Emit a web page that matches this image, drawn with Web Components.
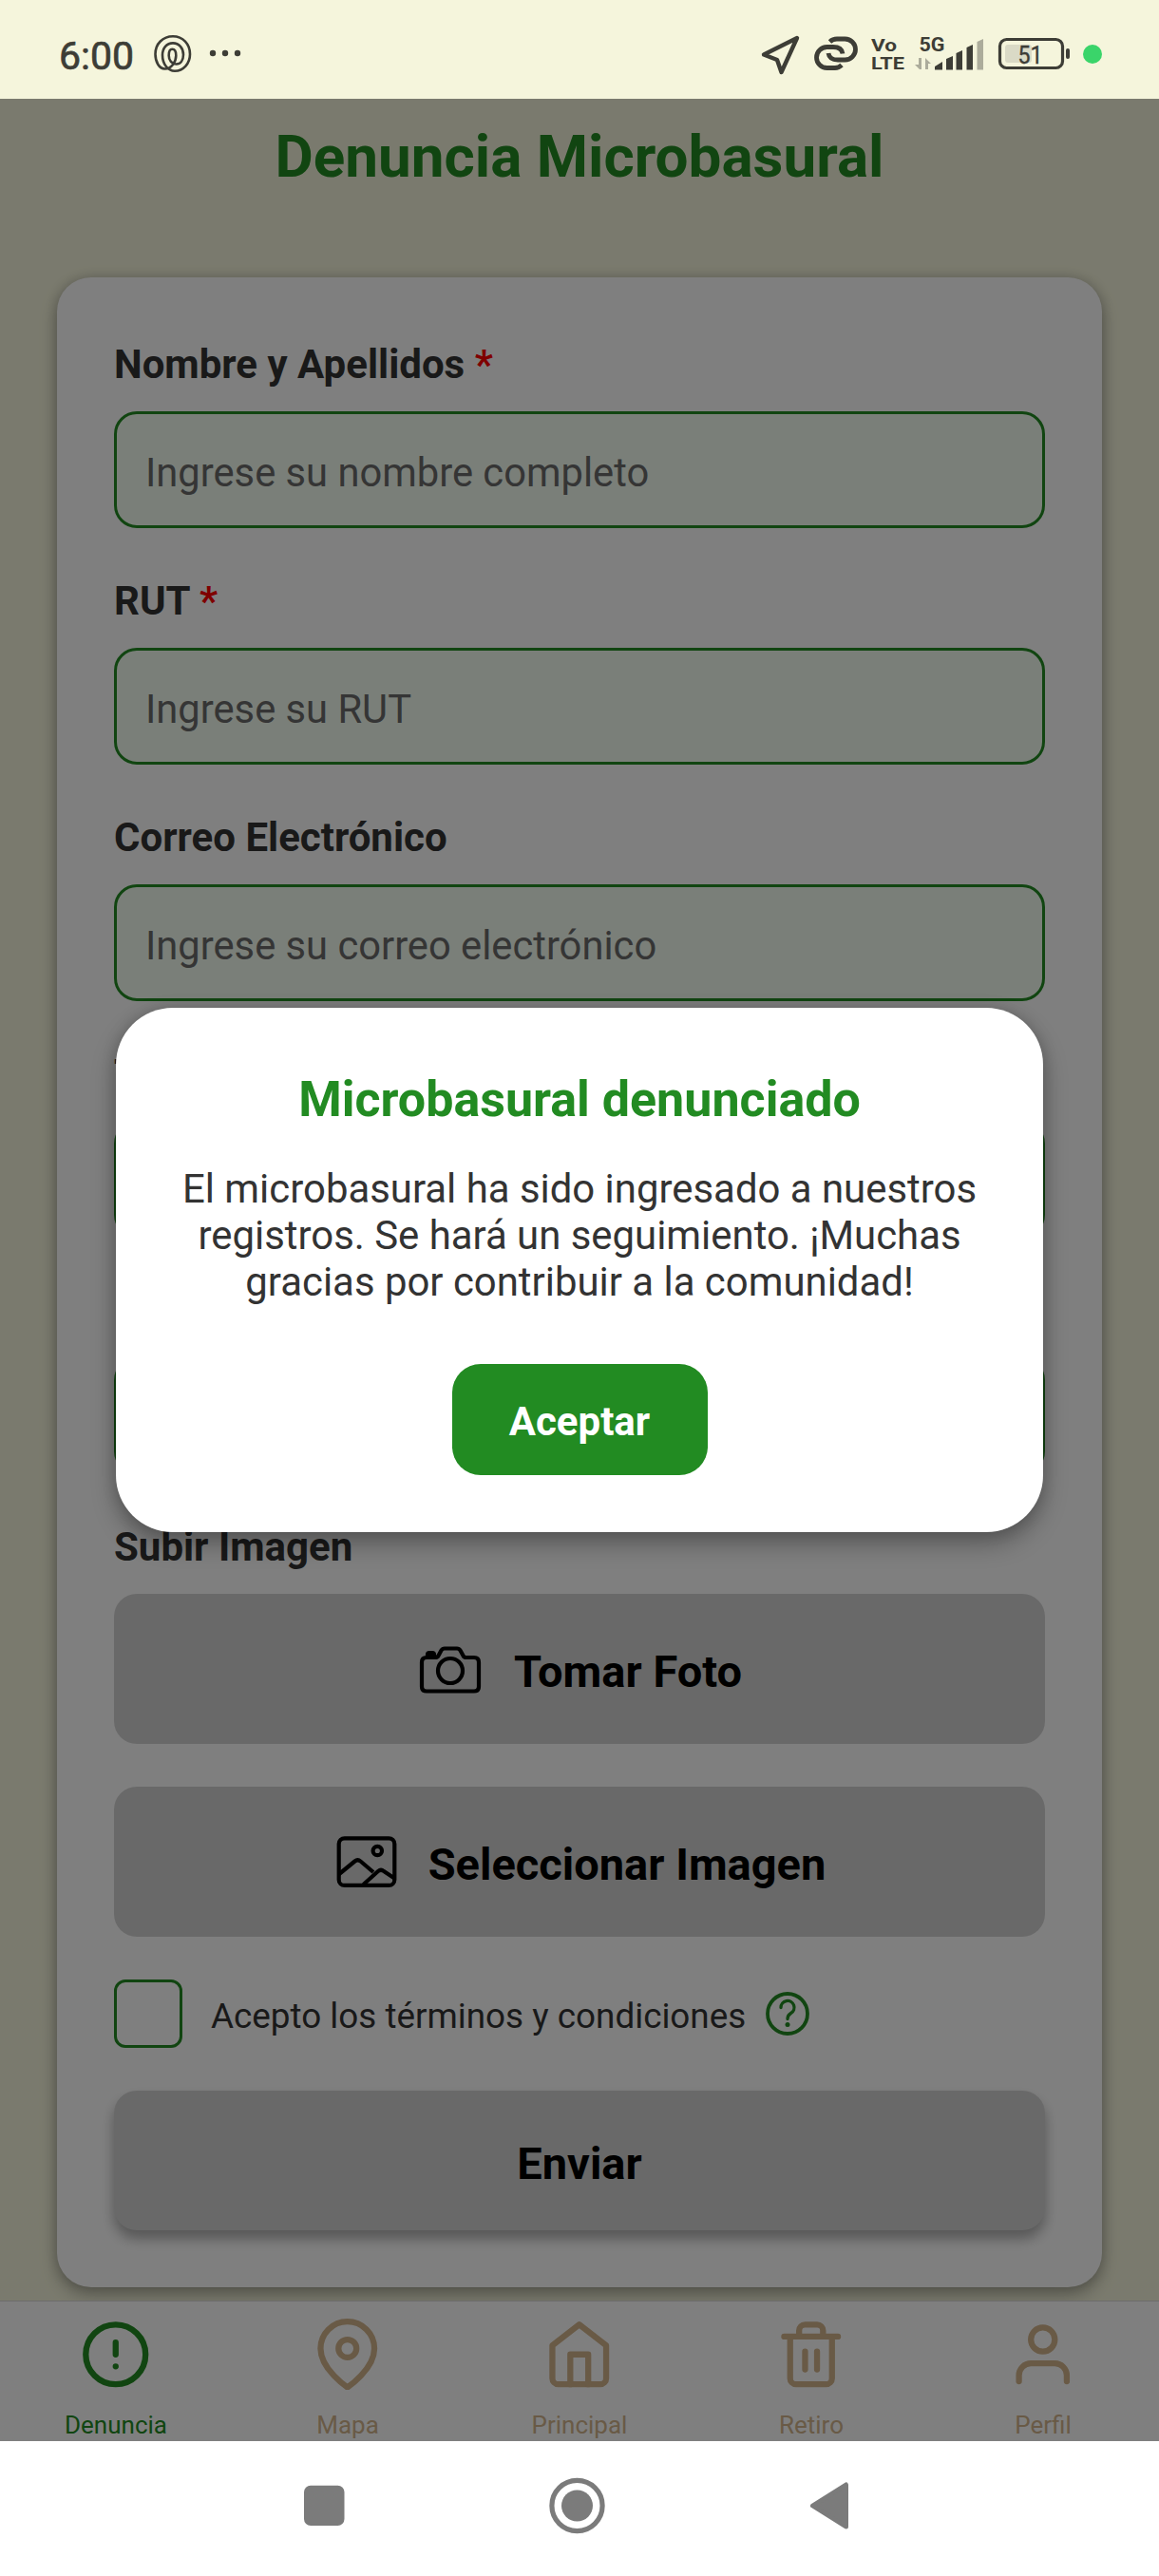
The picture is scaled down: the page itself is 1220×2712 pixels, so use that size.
<!DOCTYPE html>
<html lang="es"><head><meta charset="utf-8"><title>Denuncia Microbasural</title>
<style>
html,body{margin:0;padding:0}
body{font-family:Roboto,"Noto Sans",sans-serif;width:1220px;height:2712px;overflow:hidden;background:#f5f5dc;color:#333}
</style></head><body>
<denuncia-app></denuncia-app>
<script>
const define=(name,css,html)=>customElements.define(name,class extends HTMLElement{
  constructor(){super();const r=this.attachShadow({mode:'open'});
    r.innerHTML='<style>*{box-sizing:border-box}'+css+'</style>'+(typeof html==='function'?html(this):html);}
});

define('status-bar',`
:host{display:flex;height:104px;background:#f5f5dc;justify-content:space-between;align-items:flex-start;color:#3d3d36}
.l,.r{display:flex;align-items:flex-start}
.time{margin:35px 0 0 62px;width:100px;font-size:41px;line-height:48px;font-weight:400;white-space:nowrap;-webkit-text-stroke:.7px #3d3d36}
svg{display:block}
`,`<div class="l"><div class="time">6:00</div>
<svg width="100" height="104" viewBox="162 0 100 104" fill="none" stroke="#3d3d36" stroke-width="2.6">
<path d="M181.300 51.800C184 51.800 185.300 55 185.300 58.500C185.300 65 180.500 72.500 173.500 72.500C167.500 72.500 163.500 65 163.500 57C163.500 46 171.500 38.300 182 38.300C192.500 38.300 200 46.500 200 57C200 67 193 74.700 184 74.700C176.500 74.700 171 67 171 58C171 50.500 175.500 45.400 182 45.400C188.500 45.400 193 50.500 193 57.500C193 63.500 190 67.500 185.500 67.500C181 67.500 177.700 63.500 177.700 58.500C177.700 55 178.800 51.800 181.300 51.800z"/>
<g fill="#3d3d36" stroke="none"><circle cx="224" cy="56" r="3.200"/><circle cx="237" cy="56" r="3.200"/><circle cx="250" cy="56" r="3.200"/></g></svg></div>
<svg width="430" height="104" viewBox="790 0 430 104" fill="none" stroke="#3d3d36" font-family="Roboto">
<path d="M839 40 804 57.500l14 5.500 4.500 13z" stroke-width="4.400" stroke-linejoin="round"/>
<g stroke-width="4.800"><path d="M873.500 44q3-3 7.500-3h8.500a11 11 0 0 1 0 22H882q-9 0-10-7"/><path d="M886 68.500q-3 3-7 3h-8.500a11 11 0 0 1 0-22H877q9 0 10 7"/></g>
<g fill="#3d3d36" stroke="none">
<text x="917" y="54" font-size="18.500" font-weight="700" textLength="27" lengthAdjust="spacingAndGlyphs">Vo</text><text x="917" y="72.500" font-size="18.500" font-weight="700" textLength="35" lengthAdjust="spacingAndGlyphs">LTE</text>
<text x="967.500" y="53.500" font-size="20" font-weight="700" textLength="27" lengthAdjust="spacingAndGlyphs">5G</text>
<path d="M984 70l8-5v8.500h-8zM996 62l7-3v14.500h-7zM1006.500 56l6.500-3v20.500h-6.500zM1017.500 50l6.500-3v26.500h-6.500z"/>
<path d="M1028.500 44l6.500-3v32.500h-6.500z" fill="#acac9b"/>
<path d="M967 61h3v12h-2l-5-5h4zM974 61l6 6h-3v6h-3z" fill="#acac9b"/>
<rect x="1058" y="47" width="28" height="19" rx="3" fill="#dadac6"/>
<rect x="1122" y="51" width="4" height="11" rx="2"/>
<text x="1071.500" y="67" font-size="25" font-weight="400" textLength="26" lengthAdjust="spacingAndGlyphs" stroke="#3d3d36" stroke-width=".4">51</text></g>
<rect x="1052.500" y="41.500" width="66" height="30" rx="7" stroke-width="3.200"/>
<circle cx="1150" cy="57" r="10" fill="#3ad46a" stroke="none"/></svg>`);

define('form-field',`
:host{display:block;height:198px}
label{display:block;height:49px;line-height:51px;font-size:42px;font-weight:700;margin-bottom:26px;white-space:nowrap}
i{font-style:normal;color:red}
.in{height:123px;border:3px solid #228b22;border-radius:24px;background:#f5fff3;padding:0 30px;line-height:123px;font-size:41.700px;color:#6b6b6b}
`,el=>`<label><slot></slot>${el.hasAttribute('required')?' <i>*</i>':''}</label><div class="in">${el.getAttribute('placeholder')||''}</div>`);

define('media-button',`
:host{display:flex;height:158px;border-radius:24px;background:#d3d3d3;justify-content:center;align-items:center;gap:30px;font-size:47px;font-weight:700;color:#000;line-height:60px}
::slotted(svg){display:block}
span{padding-top:5px}
`,`<slot name="icon"></slot><span><slot></slot></span>`);

define('terms-row',`
:host{display:flex;height:72px;align-items:center}
.box{width:72px;height:72px;border:3px solid #228b22;border-radius:12px;margin-right:30px}
.t{font-size:36.850px;line-height:44px;white-space:nowrap;padding-top:6px}
svg{margin-left:20px}
`,`<div class="box"></div><div class="t"><slot></slot></div>
<svg width="48" height="48" viewBox="-24 -24 48 48" fill="none" stroke="#228b22" stroke-width="3.800"><circle r="21"/><path d="M-7-6.500a7 7 0 1 1 10.500 6Q0 1.500 0 5.500" stroke-linecap="round" stroke-width="3.300"/><circle cy="11.500" r="2.500" fill="#228b22" stroke="none"/></svg>`);

define('submit-button',`
:host{display:block;height:147px;border-radius:24px;background:#d3d3d3;text-align:center;line-height:153px;font-size:47px;font-weight:700;color:#000;box-shadow:0 9px 14px rgba(0,0,0,.32)}
`,`<slot></slot>`);

define('report-card',`
:host{display:flex;flex-direction:column;margin:0 60px;height:2116px;background:#fff;border-radius:36px;padding:66px 60px 60px;box-shadow:0 8px 18px rgba(0,0,0,.28),0 0 14px rgba(0,0,0,.16)}
.f{display:flex;flex-direction:column;gap:51px}
.s{font-size:42px;font-weight:700;height:49px;line-height:51px;margin:51px 0 26px}
.b{display:flex;flex-direction:column;gap:45px}
`,`<div class="f">
<form-field required placeholder="Ingrese su nombre completo">Nombre y Apellidos</form-field>
<form-field required placeholder="Ingrese su RUT">RUT</form-field>
<form-field placeholder="Ingrese su correo electrónico">Correo Electrónico</form-field>
<form-field>Teléfono</form-field>
<form-field></form-field></div>
<div class="s">Subir Imagen</div>
<div class="b">
<media-button>
<svg slot="icon" width="72" height="64" viewBox="438 1726 72 64" fill="none" stroke="#000" stroke-width="4.200" stroke-linejoin="round"><path d="M448 1746h9.500q2 0 3-2l3-5.500q1.200-2 3.500-2h13q2.300 0 3.500 2l3 5.500q1 2 3 2h8.500q5 0 5 5v25.500q0 5-5 5h-50q-5 0-5-5v-25.500q0-5 5-5z"/><circle cx="473" cy="1760" r="13"/><path d="M449 1744v-1q0-2 2-2h3q2 0 2 2v2z" fill="#000"/></svg>Tomar Foto</media-button>
<media-button>
<svg slot="icon" width="70" height="64" viewBox="351 1929 70 64" fill="none" stroke="#000" stroke-width="4.200" stroke-linejoin="round"><rect x="356.700" y="1936.300" width="58.600" height="49.600" rx="6"/><circle cx="397.300" cy="1949.500" r="4.700"/><path d="M357 1974l16.500-13.500q3-2.500 6 0L393 1972M382.500 1985l15.500-14q3-2.500 6 0l12 8"/></svg>Seleccionar Imagen</media-button>
<terms-row>Acepto los términos y condiciones</terms-row>
<submit-button>Enviar</submit-button></div>`);

define('tab-item',`
:host{display:flex;flex:1;flex-direction:column;align-items:center;color:#d2b48c;font-size:26px;line-height:30px}
:host([active]){color:#228b22}
svg{display:block;margin:17.500px 0 21.500px}
`,el=>`<svg width="75.500" height="75.500" viewBox="0 0 24 24" fill="none" stroke="currentColor" stroke-width="2" stroke-linecap="round" stroke-linejoin="round">${({
alert:'<circle cx="12" cy="12" r="10"/><path d="M12 8v4M12 16h.01"/>',
pin:'<path d="M21 10c0 7-9 13-9 13s-9-6-9-13a9 9 0 0 1 18 0z"/><circle cx="12" cy="10" r="3"/>',
home:'<path d="M3 9l9-7 9 7v11a2 2 0 0 1-2 2H5a2 2 0 0 1-2-2z"/><path d="M9 22V12h6v10"/>',
trash:'<path d="M3 6h18M19 6v14a2 2 0 0 1-2 2H7a2 2 0 0 1-2-2V6m3 0V4a2 2 0 0 1 2-2h4a2 2 0 0 1 2 2v2M10 11v6M14 11v6"/>',
user:'<path d="M20 21v-2a4 4 0 0 0-4-4H8a4 4 0 0 0-4 4v2"/><circle cx="12" cy="7" r="4"/>'})[el.getAttribute('icon')]}</svg><span><slot></slot></span>`);

define('tab-bar',`
:host{display:flex;position:relative;height:148px;background:#fff;border-top:1px solid #d8d8d8}
`,`<slot></slot>`);

define('alert-dialog',`
:host{display:flex;position:absolute;left:0;right:0;top:0;bottom:0;background:rgba(0,0,0,.5);align-items:center;justify-content:center}
.d{width:976px;height:552px;background:#fff;border-radius:60px;box-shadow:0 12px 26px rgba(0,0,0,.3),0 0 16px rgba(0,0,0,.15);display:flex;flex-direction:column;align-items:center;padding-top:66px}
h2{margin:0 0 38px;color:#228b22;font-size:52px;line-height:62px;font-weight:700;white-space:nowrap}
p{margin:0 0 62px;font-size:41.900px;line-height:49px;text-align:center;white-space:nowrap}
.ok{width:269px;height:117px;border-radius:30px;background:#228b22;color:#fff;font-weight:700;font-size:42px;line-height:121px;text-align:center}
`,`<div class="d"><h2><slot name="title"></slot></h2><p><slot></slot></p><div class="ok">Aceptar</div></div>`);

define('system-nav',`
:host{display:block;height:142px;background:#fff}svg{display:block}
`,`<svg width="1220" height="142" viewBox="0 2570 1220 142" fill="#7b7b7b"><rect x="320" y="2616.700" width="42.500" height="42.300" rx="7"/><circle cx="607.500" cy="2638" r="16.500"/><circle cx="607.500" cy="2638" r="26.600" fill="none" stroke="#7b7b7b" stroke-width="5.200"/><path d="M855.500 2638 890.500 2616v44z" stroke="#7b7b7b" stroke-width="5" stroke-linejoin="round"/></svg>`);

define('denuncia-app',`
:host{display:flex;flex-direction:column;width:1220px;height:2712px}
main{position:relative;display:flex;flex-direction:column;height:2466px}
h1{margin:23px 0 0;height:166px;font-size:62px;line-height:76px;font-weight:700;color:#228b22;text-align:center}
report-card{flex:none;margin-bottom:14px}
`,`<status-bar></status-bar><main><h1>Denuncia Microbasural</h1><report-card></report-card>
<tab-bar><tab-item icon="alert" active>Denuncia</tab-item><tab-item icon="pin">Mapa</tab-item><tab-item icon="home">Principal</tab-item><tab-item icon="trash">Retiro</tab-item><tab-item icon="user">Perfil</tab-item></tab-bar>
<alert-dialog><span slot="title">Microbasural denunciado</span>El microbasural ha sido ingresado a nuestros<br>registros. Se hará un seguimiento. ¡Muchas<br>gracias por contribuir a la comunidad!</alert-dialog></main><system-nav></system-nav>`);
</script></body></html>
